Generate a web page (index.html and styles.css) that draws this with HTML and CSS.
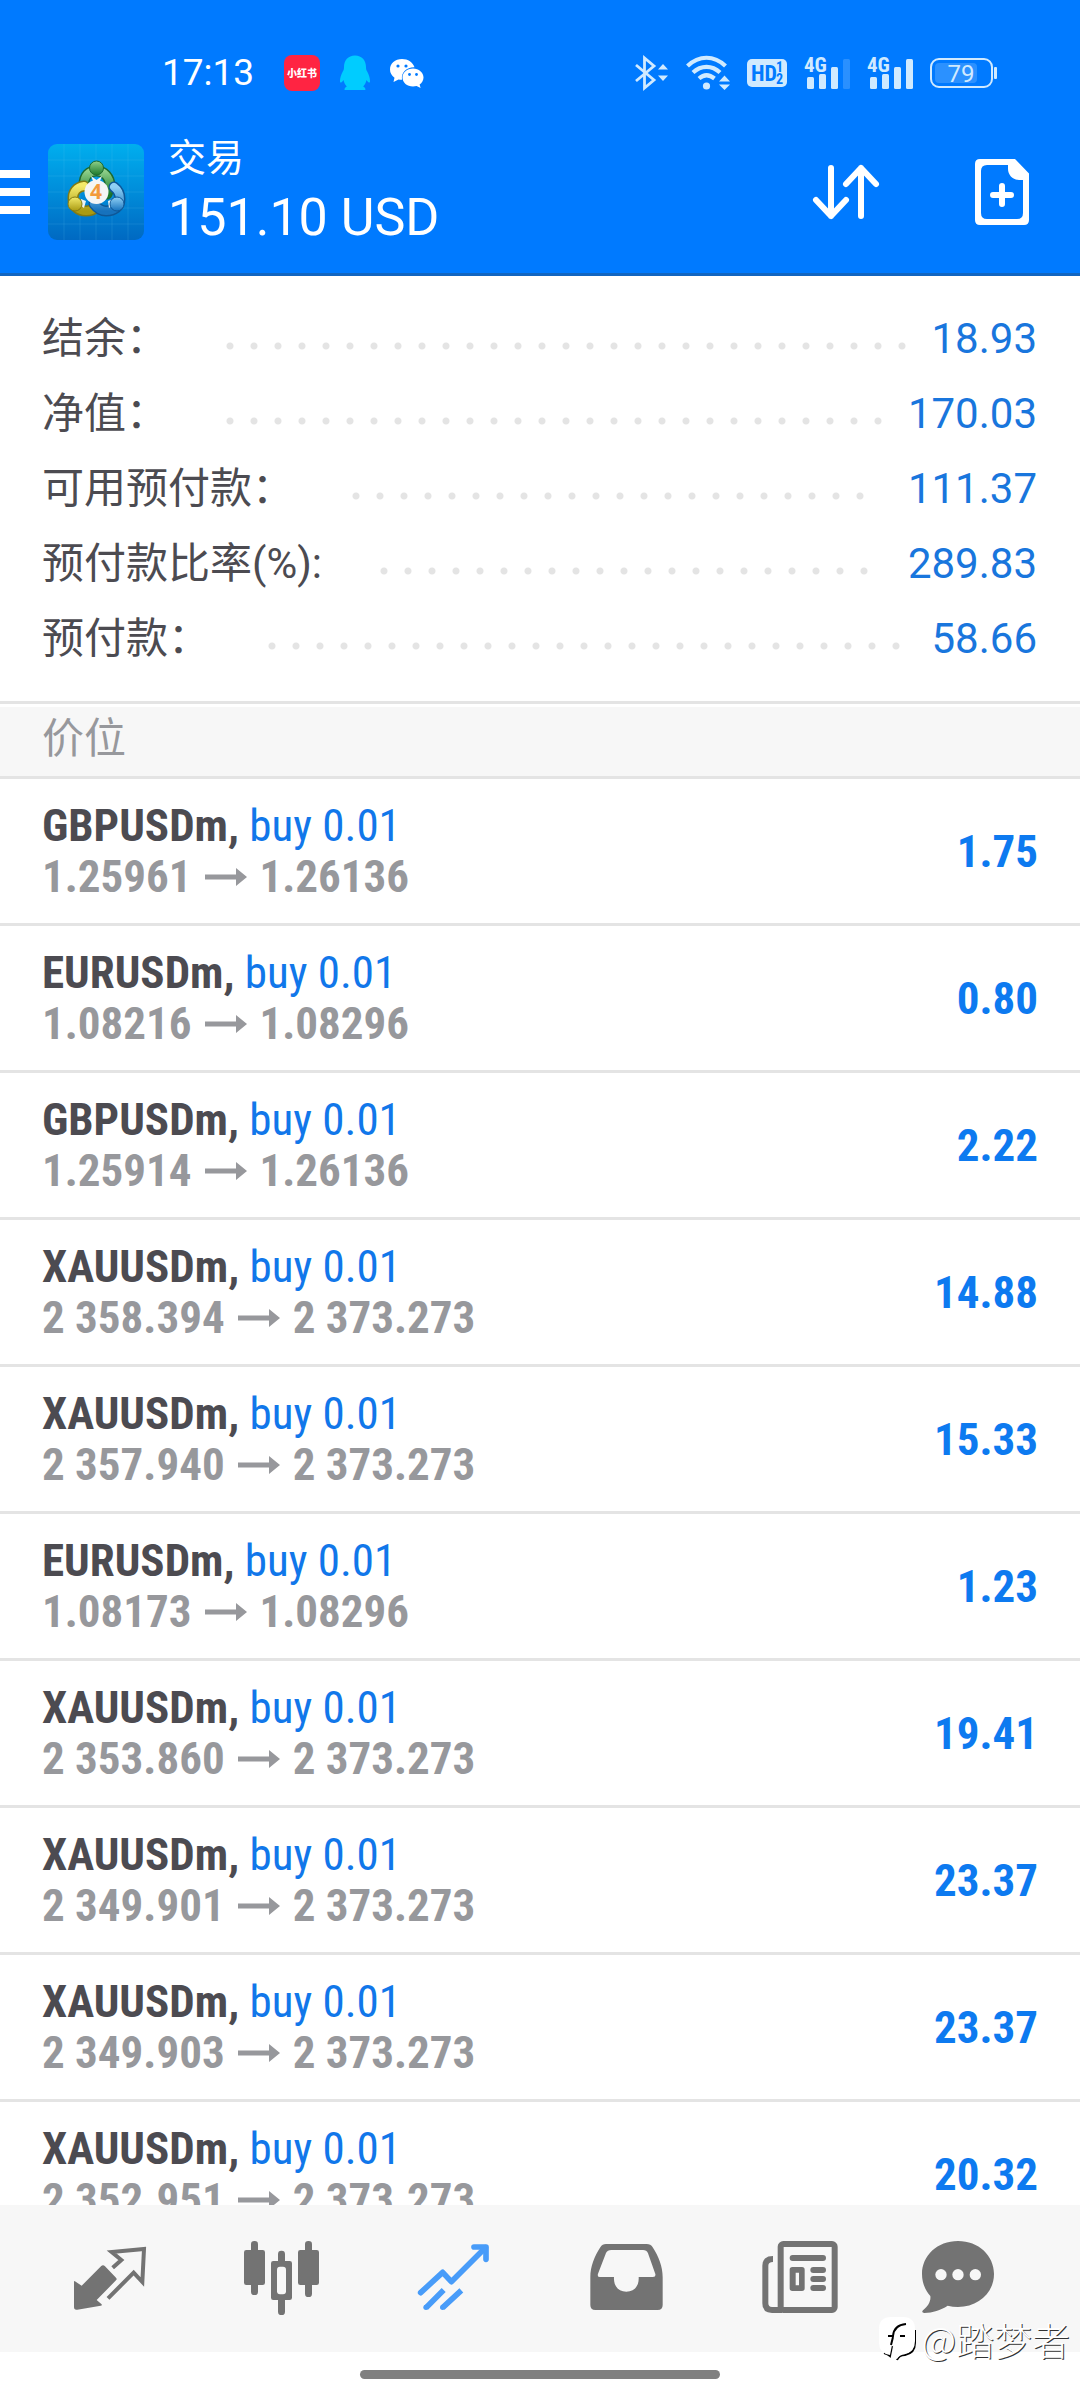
FILE: index.html
```
<!DOCTYPE html>
<html lang="zh-CN">
<head>
<meta charset="utf-8">
<meta name="viewport" content="width=device-width, initial-scale=1">
<title>交易</title>
<link rel="stylesheet" href="styles.css">
</head>
<body>
<svg class="defs" aria-hidden="true">
  <defs>
    <linearGradient id="logo-bg" x1="0" y1="0" x2="0" y2="1"><stop offset="0" stop-color="#00aeee"/><stop offset=".45" stop-color="#0090dc"/><stop offset="1" stop-color="#0069c2"/></linearGradient>
    <linearGradient id="green" x1="0" y1="0" x2="0" y2="1"><stop offset="0" stop-color="#8fd08a"/><stop offset="1" stop-color="#1c7a2c"/></linearGradient>
    <linearGradient id="yellow" x1="0" y1="0" x2="0" y2="1"><stop offset="0" stop-color="#f3ea6a"/><stop offset="1" stop-color="#a99a12"/></linearGradient>
    <linearGradient id="blue" x1="0" y1="0" x2="0" y2="1"><stop offset="0" stop-color="#8fd0f5"/><stop offset="1" stop-color="#1672bd"/></linearGradient>
    <symbol id="arrow" viewBox="0 0 42 18"><path d="M0 6.500h31V0l11 9-11 9v-6.500H0z" fill="#97989c"/></symbol>
  </defs>
</svg>

<header class="top">
  <div class="status">
    <div class="status-left">
      <span class="clock">17:13</span>
      <svg width="36" height="36" viewBox="0 0 36 36"><rect width="36" height="36" rx="8" fill="#ff2442"/><text x="18" y="22" class="xhs">小红书</text></svg>
      <svg width="30" height="36" viewBox="0 0 30 36"><path d="M15 0.500c-7 0-11 5-11 11.500 0 2-.3 3-1.200 4.500C1 20 0 23 0 26c0 2 1 2.500 3.500-1 .5 2.500 1.500 4.500 3.300 6.500C4.500 32.500 4 35 5 35h20c1 0 .5-2.500-1.800-3.500 1.800-2 2.800-4 3.300-6.500C29 28.500 30 28 30 26c0-3-1-6-2.800-9.500C26.300 15 26 14 26 12 26 5.500 22 .5 15 .5z" fill="#00ccff"/></svg>
      <svg width="34" height="30" viewBox="0 0 34 30"><path d="M12 1C5 1 0 5.600 0 11.500c0 3.300 1.700 6.200 4.500 8.200L3.500 24l5-2.600c1.100.3 2.400.4 3.500.4C11 14 17 9 24.500 9.300 23 4.500 18 1 12 1z" fill="#fff"/><path d="M23 10.500c-6 0-10.500 4-10.500 9s4.500 9 10.500 9c1.200 0 2.500-.2 3.600-.5l4 2-1-3.400c2.300-1.700 3.900-4.200 3.900-7.100 0-5-4.700-9-10.500-9z" fill="#fff"/><g fill="#007aff"><circle cx="8" cy="8" r="1.600"/><circle cx="16" cy="8" r="1.600"/><circle cx="19.500" cy="16.500" r="1.400"/><circle cx="26.500" cy="16.500" r="1.400"/></g></svg>
    </div>
    <div class="status-right">
      <svg width="34" height="34" viewBox="0 0 34 34"><path d="M1 9l18 15-9.500 8V2L19 10 1 25" fill="none" stroke="#d0eaff" stroke-width="2.800"/><path d="M23 13.500l5-5.500 5 5.500zM23 19.500l5 5.500 5-5.500z" fill="#d0eaff"/></svg>
      <svg width="44" height="34" viewBox="0 0 44 34"><g fill="none" stroke="#d0eaff" stroke-width="4.200"><path d="M1.500 10C13-1 28-1 39.500 10"/><path d="M7 16.500c8-7.600 19-7.600 27 0"/><path d="M13 22.500c5-4.400 10-4.400 15.500 0"/></g><circle cx="20.500" cy="30" r="3.600" fill="#d0eaff"/><path d="M33 25.500l5.500-6 5.500 6zM33 28.500l5.500 5.500 5.500-5.500z" fill="#d0eaff"/></svg>
      <svg width="40" height="28" viewBox="0 0 40 28"><rect width="40" height="28" rx="5" fill="#d0eaff"/><text x="4" y="22" class="hd">HD</text><text x="29" y="13" class="hd-num">1</text><text x="29" y="25" class="hd-num">2</text></svg>
      <svg width="46" height="34" viewBox="0 0 46 34"><text x="0" y="16" class="gen">4G</text><g fill="#d0eaff"><rect x="3" y="21" width="7" height="12" rx="1.500"/><rect x="15" y="18" width="7" height="15" rx="1.500"/><rect x="27" y="11" width="7" height="22" rx="1.500"/><rect x="39" y="3" width="7" height="30" rx="1.500" opacity=".2"/></g></svg>
      <svg width="46" height="34" viewBox="0 0 46 34"><text x="0" y="16" class="gen">4G</text><g fill="#d0eaff"><rect x="3" y="21" width="7" height="12" rx="1.500"/><rect x="15" y="18" width="7" height="15" rx="1.500"/><rect x="27" y="11" width="7" height="22" rx="1.500"/><rect x="39" y="3" width="7" height="30" rx="1.500"/></g></svg>
      <svg width="67" height="30" viewBox="0 0 67 30"><rect x="1" y="1" width="61" height="28" rx="8" fill="none" stroke="#d0eaff" stroke-width="2"/><rect x="5" y="5" width="42" height="20" rx="4" fill="#2b91ff"/><rect x="64" y="9" width="3" height="12" rx="1" fill="#d0eaff"/><text x="31" y="24" class="batt">79</text></svg>
    </div>
  </div>
  <div class="appbar">
    <button class="menu" aria-label="菜单"><span></span><span></span><span></span></button>
    <svg class="logo" width="96" height="96" viewBox="0 0 96 96">
      <rect width="96" height="96" rx="9" fill="url(#logo-bg)"/>
      <path d="M16 0v96M32 0v96M48 0v96M64 0v96M80 0v96M0 16h96M0 32h96M0 48h96M0 64h96M0 80h96" stroke="#6cc8f5" stroke-opacity=".16" fill="none"/>
      <g fill="none" stroke-linecap="round">
        <path d="M36 41c0-10 5-14 12.500-14S62 33 62 42l-3 8" stroke="#1d6a30" stroke-width="11"/>
        <path d="M36 41c0-10 5-14 12.500-14S62 33 62 42l-3 8" stroke="url(#green)" stroke-width="8"/>
        <path d="M36 42c-8 1-11 7-11 12 0 9 6 13 13 13 4 0 7-1 9-3" stroke="#837a12" stroke-width="11"/>
        <path d="M36 42c-8 1-11 7-11 12 0 9 6 13 13 13 4 0 7-1 9-3" stroke="url(#yellow)" stroke-width="8"/>
        <path d="M66 43c4 3 6 7 6 12 0 8-6 12-14 12-6 0-9-3-12-7" stroke="#0e5797" stroke-width="11"/>
        <path d="M66 43c4 3 6 7 6 12 0 8-6 12-14 12-6 0-9-3-12-7" stroke="url(#blue)" stroke-width="8"/>
      </g>
      <path d="M43 32l5.500 4 5.500-4-2 5h-7zM33 55l5 2-2 7-4-3zM60 57l5-2v6l-4 3z" fill="#eef4f4"/>
      <circle cx="48.500" cy="24" r="7" fill="url(#green)" stroke="#1d6a30"/>
      <circle cx="27" cy="60" r="7" fill="url(#yellow)" stroke="#837a12"/>
      <circle cx="69" cy="60" r="7" fill="url(#blue)" stroke="#0e5797"/>
      <circle cx="48.500" cy="48" r="12" fill="#f5f5f5"/>
      <text x="48" y="55" class="logo-num">4</text>
    </svg>
    <div class="heading">
      <h1>交易</h1>
      <p>151.10 USD</p>
    </div>
    <div class="actions">
      <button aria-label="排序"><svg width="66" height="56" viewBox="0 0 66 56"><path d="M18 4v48M3 36l15 16 15-16M48 52V4M33 20L48 4l15 16" fill="none" stroke="#fff" stroke-width="6" stroke-linecap="round" stroke-linejoin="round"/></svg></button>
      <button aria-label="新订单"><svg width="54" height="66" viewBox="0 0 54 66"><path fill-rule="evenodd" d="M5 0h35l14 14.500V61q0 5-5 5H5q-5 0-5-5V5q0-5 5-5zM12 6q-6 0-6 6v42q0 6 6 6h30q6 0 6-6V21h-4c-6 0-11-5-11-11V6z" fill="#fff"/><path d="M27 27v18M18 36h18" stroke="#fff" stroke-width="6" stroke-linecap="round"/></svg></button>
    </div>
  </div>
</header>

<main class="content">
  <dl class="summary">
    <div class="line"><dt>结余：</dt><dd class="leader"><i></i></dd><dd>18.93</dd></div>
    <div class="line"><dt>净值：</dt><dd class="leader"><i></i></dd><dd>170.03</dd></div>
    <div class="line"><dt>可用预付款：</dt><dd class="leader"><i></i></dd><dd>111.37</dd></div>
    <div class="line"><dt>预付款比率(%):</dt><dd class="leader"><i></i></dd><dd>289.83</dd></div>
    <div class="line"><dt>预付款：</dt><dd class="leader"><i></i></dd><dd>58.66</dd></div>
  </dl>
  <h2 class="section">价位</h2>
  <ul class="positions">
    <li><div><p class="deal"><b>GBPUSDm,</b> buy 0.01</p><p class="prices">1.25961<svg width="42" height="18"><use href="#arrow"/></svg>1.26136</p></div><strong>1.75</strong></li>
    <li><div><p class="deal"><b>EURUSDm,</b> buy 0.01</p><p class="prices">1.08216<svg width="42" height="18"><use href="#arrow"/></svg>1.08296</p></div><strong>0.80</strong></li>
    <li><div><p class="deal"><b>GBPUSDm,</b> buy 0.01</p><p class="prices">1.25914<svg width="42" height="18"><use href="#arrow"/></svg>1.26136</p></div><strong>2.22</strong></li>
    <li><div><p class="deal"><b>XAUUSDm,</b> buy 0.01</p><p class="prices">2 358.394<svg width="42" height="18"><use href="#arrow"/></svg>2 373.273</p></div><strong>14.88</strong></li>
    <li><div><p class="deal"><b>XAUUSDm,</b> buy 0.01</p><p class="prices">2 357.940<svg width="42" height="18"><use href="#arrow"/></svg>2 373.273</p></div><strong>15.33</strong></li>
    <li><div><p class="deal"><b>EURUSDm,</b> buy 0.01</p><p class="prices">1.08173<svg width="42" height="18"><use href="#arrow"/></svg>1.08296</p></div><strong>1.23</strong></li>
    <li><div><p class="deal"><b>XAUUSDm,</b> buy 0.01</p><p class="prices">2 353.860<svg width="42" height="18"><use href="#arrow"/></svg>2 373.273</p></div><strong>19.41</strong></li>
    <li><div><p class="deal"><b>XAUUSDm,</b> buy 0.01</p><p class="prices">2 349.901<svg width="42" height="18"><use href="#arrow"/></svg>2 373.273</p></div><strong>23.37</strong></li>
    <li><div><p class="deal"><b>XAUUSDm,</b> buy 0.01</p><p class="prices">2 349.903<svg width="42" height="18"><use href="#arrow"/></svg>2 373.273</p></div><strong>23.37</strong></li>
    <li><div><p class="deal"><b>XAUUSDm,</b> buy 0.01</p><p class="prices">2 352.951<svg width="42" height="18"><use href="#arrow"/></svg>2 373.273</p></div><strong>20.32</strong></li>
  </ul>
</main>

<footer class="bottom">
  <nav class="tabs">
    <a href="#quotes" aria-label="行情"><svg viewBox="0 0 300 270">
      <path d="M42 156q0-6 5-1l18 12 58-58q6-6 12 0l33 34q4 4 0 8l-58 59 14 12q4 4-2 5l-70 12q-10 2-10-8z" fill="#737373"/>
      <path d="M158 113l26-23-29-24 97-9-5 99-26-28-77 77" fill="none" stroke="#737373" stroke-width="12"/></svg></a>
    <a href="#charts" aria-label="图表"><svg viewBox="516 0 300 270">
      <g fill="#737373"><rect x="552" y="60" width="63" height="105" rx="7"/><rect x="573" y="33" width="21" height="162" rx="10"/><rect x="714" y="60" width="63" height="105" rx="7"/><rect x="735" y="33" width="21" height="168" rx="10"/><rect x="654" y="62" width="21" height="193" rx="10"/><rect x="633" y="93" width="63" height="117" rx="7"/></g><rect x="651" y="110" width="27" height="83" rx="9" fill="#f7f7f7"/></svg></a>
    <a href="#trade" aria-label="交易" aria-current="page"><svg viewBox="1032 0 300 270">
      <g fill="none" stroke="#489cf9" stroke-width="17"><path d="M1082 188l66-61 26 28 102-102" stroke-linecap="round" stroke-linejoin="round"/><path d="M1242 51h36v37" stroke-linecap="round" stroke-linejoin="round"/><path d="M1151 180l-53 53M1204 181l-56 52"/></g><g fill="#489cf9"><path d="M1256 51h24v24z"/><circle cx="1098" cy="232" r="8"/><circle cx="1148" cy="232" r="8"/></g></svg></a>
    <a href="#history" aria-label="历史"><svg viewBox="-12 0 300 270">
      <path fill-rule="evenodd" d="M78 42h122q12 0 18 10c18 28 30 58 30 90v83q0 15-15 15H46q-15 0-15-15v-83c0-32 12-62 30-90q6-10 17-10zM94 60q-12 0-16 9L54 131q-3 10 6 10h42c-2 28 14 44 37 44s39-16 37-44h43q9 0 7-9l-22-62q-4-10-15-10z" fill="#737373"/></svg></a>
    <a href="#news" aria-label="新闻"><svg viewBox="504 0 300 270">
      <g fill="none" stroke="#737373" stroke-width="18"><rect x="602" y="42" width="162" height="198" rx="8"/><path d="M579 87q-23 0-23 20v113q0 20 20 20h30"/><path d="M638 84h91M700 120h29M700 147h29M700 174h29" stroke-linecap="round"/></g><path fill-rule="evenodd" d="M637 111h29q8 0 8 8v56q0 8-8 8h-29q-8 0-8-8v-56q0-8 8-8zM647 128v38h10v-38z" fill="#737373"/></svg></a>
    <a href="#messages" aria-label="消息"><svg viewBox="1020 0 300 270">
      <path d="M1134 33c62 0 108 44 108 99s-46 99-108 99q-16 0-31-4c-22 14-44 21-70 22q-10-1-4-8c16-13 24-28 22-43-16-18-25-41-25-66 0-55 46-99 108-99z" fill="#737373"/><g fill="#f7f7f7"><circle cx="1083" cy="134" r="17"/><circle cx="1134" cy="134" r="17"/><circle cx="1186" cy="134" r="17"/></g></svg></a>
  </nav>
  <div class="home"><span></span></div>
  <div class="watermark">
    <svg width="38" height="44" viewBox="0 0 38 44"><path d="M5 36q4 1 6 3l2-10M36 13v13q0 10-10 12-6 0-8 5" fill="none" stroke="#000" stroke-width="2"/><path d="M12 0h12q12 0 12 12v12q0 11-10 13-6 1-8 5l-5-3 2-11h-2l-2 10Q0 36 0 26V12Q0 0 12 0z" fill="#fff"/><path d="M9 19h5q1-11 13-12M14 20l-2 8M21 19h5" fill="none" stroke="#000" stroke-width="2"/></svg>
    <span>@踏梦者</span>
  </div>
</footer>
</body>
</html>
```
FILE: styles.css
```
* { box-sizing: border-box; margin: 0; padding: 0; }

body {
  height: 100vh;
  display: flex;
  flex-direction: column;
  background: #fff;
  color: #4c4b51;
  font-family: Roboto, "Noto Sans CJK SC", sans-serif;
}

svg { display: block; flex: none; overflow: visible; }
.defs { position: absolute; width: 0; height: 0; }
button { border: 0; background: none; }

/* header */
.top { flex: none; background: #007aff; border-bottom: 3px solid #1265c0; color: #fff; }
.status {
  height: 110px;
  padding: 36px 83px 0 162px;
  display: flex;
  align-items: center;
  justify-content: space-between;
}
.status-left { display: flex; align-items: center; gap: 20px; }
.status-right { display: flex; align-items: center; gap: 17px; }
.clock { width: 102px; font-size: 37px; line-height: 40px; }
.xhs { font: 900 10px "Noto Sans CJK SC", sans-serif; fill: #fff; text-anchor: middle; }
.hd { font: 700 22px "Roboto Condensed", sans-serif; fill: #007aff; }
.hd-num { font: 700 14px "Roboto Condensed", sans-serif; fill: #007aff; }
.gen { font: 700 21px "Roboto Condensed", sans-serif; fill: #d0eaff; }
.batt { font: 24px Roboto, sans-serif; fill: #d0eaff; text-anchor: middle; }

.appbar { height: 163px; padding-right: 51px; display: flex; align-items: center; }
.menu { width: 30px; margin-right: 18px; display: grid; gap: 10px; }
.menu span { height: 8px; background: #fff; }
.logo-num { font: 700 21px "Open Sans", sans-serif; fill: #f39a3c; text-anchor: middle; }
.heading { margin-left: 24px; flex: 1; }
.heading h1 { font-size: 38px; line-height: 52px; font-weight: 400; }
.heading p { font-size: 52px; line-height: 68px; }
.actions { display: flex; align-items: center; gap: 96px; }

/* account summary */
.content { flex: 1; min-height: 0; overflow: hidden; }
.summary { padding: 25px 43px 25px 42px; border-bottom: 3px solid #e4e4e4; }
.line { height: 75px; display: flex; align-items: center; font-size: 42px; line-height: 60px; }
.line dt { margin-right: 50px; }
.line dd { color: #1976dd; }
.line .leader { flex: 1; padding: 14px 15px 0 0; }
.leader i {
  display: block;
  width: round(down, 100%, 24px);
  height: 8px;
  background: radial-gradient(circle, #e4e4e4 3px, transparent 4px) 0 0 / 24px 8px repeat-x;
}

/* open positions */
.section {
  margin-top: 3px;
  padding: 2px 42px 7px;
  background: #f7f7f7;
  border-bottom: 3px solid #e4e4e4;
  color: #97989c;
  font-size: 42px;
  line-height: 60px;
  font-weight: 400;
}
.positions { list-style: none; font-family: "Roboto Condensed", Roboto, sans-serif; }
.positions li {
  padding: 21px 42px;
  display: flex;
  align-items: center;
  justify-content: space-between;
  border-bottom: 3px solid #e4e4e4;
  font-size: 45px;
  line-height: 51px;
}
.deal { color: #1177ea; }
.deal b { color: #4c4b51; }
.prices { display: flex; align-items: center; gap: 13px; color: #97989c; font-weight: 700; }
.positions strong { color: #0d7af0; }

/* bottom bar */
.bottom { flex: none; position: relative; }
.tabs {
  height: 147px;
  padding: 25px 24px 0;
  display: grid;
  grid-template-columns: repeat(6, 1fr);
  justify-items: center;
  align-items: start;
  background: #f7f7f7;
}
.tabs svg { width: 100px; height: 90px; }
.home { height: 48px; padding-top: 18px; display: flex; justify-content: center; }
.home span { width: 360px; height: 9px; border-radius: 5px; background: #808080; }
.watermark {
  position: absolute;
  right: 10px;
  top: 110px;
  display: flex;
  align-items: center;
  gap: 4px;
  color: #fff;
  font-family: "Noto Sans CJK SC", sans-serif;
  font-size: 38px;
  font-weight: 300;
  line-height: 48px;
  text-shadow: 1px 1px 0 #333;
}
```
